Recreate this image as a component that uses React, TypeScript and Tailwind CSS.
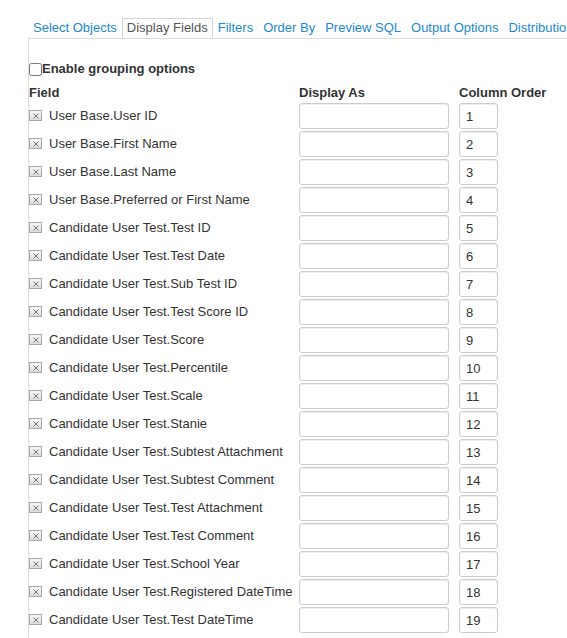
import React from 'react';

const tabs = ['Select Objects', 'Display Fields', 'Filters', 'Order By', 'Preview SQL', 'Output Options', 'Distribution'];

const fields = [
  'User Base.User ID',
  'User Base.First Name',
  'User Base.Last Name',
  'User Base.Preferred or First Name',
  'Candidate User Test.Test ID',
  'Candidate User Test.Test Date',
  'Candidate User Test.Sub Test ID',
  'Candidate User Test.Test Score ID',
  'Candidate User Test.Score',
  'Candidate User Test.Percentile',
  'Candidate User Test.Scale',
  'Candidate User Test.Stanie',
  'Candidate User Test.Subtest Attachment',
  'Candidate User Test.Subtest Comment',
  'Candidate User Test.Test Attachment',
  'Candidate User Test.Test Comment',
  'Candidate User Test.School Year',
  'Candidate User Test.Registered DateTime',
  'Candidate User Test.Test DateTime',
];

function RemoveIcon() {
  return (
    <span className="flex items-center justify-center w-[13px] h-[11px] border border-[#a8a8a8] bg-gradient-to-b from-[#f8f8f8] to-[#dcdcdc] shrink-0">
      <svg width="6" height="6" viewBox="0 0 6 6">
        <path d="M0.5 0.5L5.5 5.5M5.5 0.5L0.5 5.5" stroke="#777" strokeWidth="1" />
      </svg>
    </span>
  );
}

export default function App() {
  return (
    <div className="min-h-screen bg-white text-[13px] text-[#333] font-['Liberation_Sans',Arial,sans-serif] pt-[18px] overflow-hidden">
      <div className="ml-[28px] flex border-b border-[#dddddd] whitespace-nowrap">
        {tabs.map((t) =>
          t === 'Display Fields' ? (
            <div key={t} className="h-[20px] leading-[18px] px-[4px] border border-b-0 border-[#d4d4d4] text-[#555] bg-white">
              {t}
            </div>
          ) : (
            <div key={t} className="h-[20px] leading-[18px] px-[4px] border border-transparent text-[#2189d3]">
              {t}
            </div>
          )
        )}
      </div>
      <div className="ml-[28px] border-l border-[#dddddd] pt-[22px] min-h-[600px]">
        <label className="flex items-center h-[16px] font-bold">
          <input type="checkbox" className="m-0 w-[13px] h-[13px]" />
          Enable grouping options
        </label>
        <div className="grid grid-cols-[270px_160px_auto] font-bold mt-[8px] h-[16px] leading-[16px]">
          <div>Field</div>
          <div>Display As</div>
          <div>Column Order</div>
        </div>
        <div className="mt-px">
          {fields.map((f, i) => (
            <div key={f} className="grid grid-cols-[270px_160px_auto] h-[28px] items-center">
              <div className="flex items-center gap-[7px] whitespace-nowrap -mt-px">
                <RemoveIcon />
                <span>{f}</span>
              </div>
              <div>
                <input
                  type="text"
                  className="block w-[150px] h-[26px] border border-[#cccccc] rounded-[3px] shadow-[inset_0_1px_1px_rgba(0,0,0,0.075)] px-[6px] outline-none"
                />
              </div>
              <div>
                <input
                  type="text"
                  defaultValue={String(i + 1)}
                  className="block w-[39px] h-[26px] border border-[#cccccc] rounded-[3px] shadow-[inset_0_1px_1px_rgba(0,0,0,0.075)] px-[6px] text-[13px] text-[#333] outline-none"
                />
              </div>
            </div>
          ))}
        </div>
      </div>
    </div>
  );
}
